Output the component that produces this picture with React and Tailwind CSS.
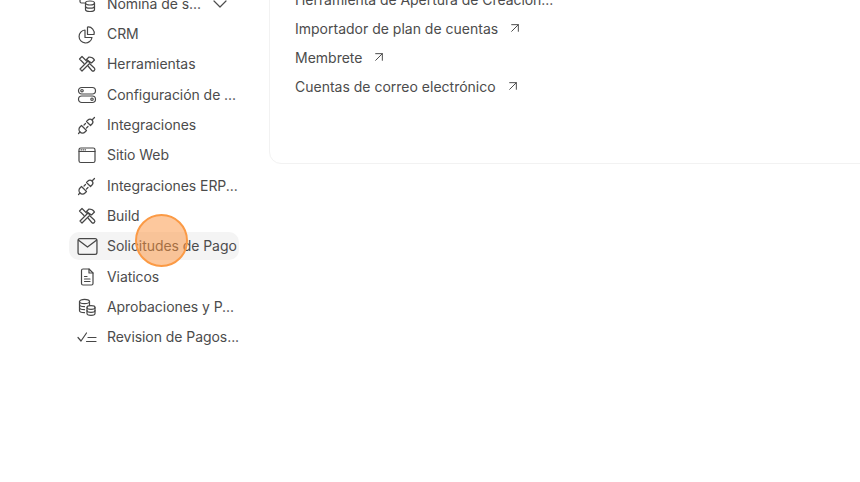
import React from 'react';
import { ChevronDown, ArrowUpRight } from 'lucide-react';

const stroke = {
  fill: 'none',
  stroke: '#474747',
  strokeWidth: 1.2,
  strokeLinecap: 'round',
  strokeLinejoin: 'round',
};

function Icon({ children, size = 20 }) {
  return (
    <svg width={size} height={size} viewBox="0 0 20 20" {...stroke}>
      {children}
    </svg>
  );
}

const PayrollIcon = () => (
  <Icon>
    <path d="M3 -2v9.500a1.500 1.500 0 0 0 1.500 1.500h3" />
    <path d="M3 4h4" />
    <ellipse cx="13" cy="9" rx="4.500" ry="2" />
    <path d="M8.500 9v6.500c0 1.100 2 2 4.500 2s4.500-.9 4.500-2V9" />
    <path d="M8.500 12.200c0 1.100 2 2 4.500 2s4.500-.9 4.500-2" />
  </Icon>
);

const PieIcon = () => (
  <Icon>
    <path d="M8 6a6.500 6.500 0 1 0 7 7.500H8z" />
    <path d="M10.500 3a6 6 0 0 1 6.500 7.500h-6.500z" />
  </Icon>
);

const ToolsIcon = () => (
  <Icon>
    <path d="M3 15 5 17 13 9 11 7z" />
    <path d="M9.500 5.500 12 3c2.500 0 4.500 1.200 5.500 3L14.500 9z" />
    <path d="M7 9.500 2.500 5 5 2.500 9.500 7" />
    <path d="M11 12l3.800 4.500a1.700 1.700 0 0 0 2.500-2.500L13 10" />
  </Icon>
);

const ServerIcon = () => (
  <Icon>
    <rect x="1.500" y="2.500" width="17" height="6.500" rx="3.200" />
    <rect x="1.500" y="11" width="17" height="6.500" rx="3.200" />
    <circle cx="5" cy="5.700" r="1.200" />
    <circle cx="15" cy="14.200" r="1.200" />
  </Icon>
);

const PlugIcon = () => (
  <Icon>
    <path d="M4.500 10.500 9.500 15.500 8 17a3.500 3.500 0 0 1-5-5z" />
    <path d="m3 17-1.500 1.500" />
    <path d="M9.500 6.500 13.500 10.500 15 9a2.800 2.800 0 0 0-4-4z" />
    <path d="M15.500 4.500 17.500 2.500" />
    <path d="M7 10 8.500 8.500M9.500 13 11 11.500" />
  </Icon>
);

const WindowIcon = () => (
  <Icon>
    <rect x="2" y="3" width="16" height="14.500" rx="1.800" />
    <path d="M2 6.500h16" />
    <path d="M4 4.800h.5M6 4.800h.5M8 4.800h.5" />
  </Icon>
);

const MailIcon = () => (
  <Icon size={21}>
    <rect x="1" y="2.500" width="18" height="15" rx="1.800" />
    <path d="m1.500 4 8.500 6.500L18.500 4" />
  </Icon>
);

const FileIcon = () => (
  <Icon>
    <path d="M4.500 3.500A1.500 1.500 0 0 1 6 2h6l4 4v10.500a1.500 1.500 0 0 1-1.500 1.500H6a1.500 1.500 0 0 1-1.500-1.500z" />
    <path d="M12 2v4h4" />
    <path d="M7.500 9.500H10M7.500 12h5.500M7.500 14.500h5.500" />
  </Icon>
);

const CoinsIcon = () => (
  <Icon>
    <ellipse cx="7.500" cy="4.500" rx="5" ry="2.200" />
    <path d="M2.500 4.500v9c0 1.200 2.200 2.200 5 2.200" />
    <path d="M2.500 7.500c0 1.200 2.200 2.200 5 2.200M2.500 10.500c0 1.200 2.200 2.200 5 2.200M12.500 4.500v4" />
    <ellipse cx="14" cy="10.500" rx="4" ry="1.800" />
    <path d="M10 10.500v6c0 1 1.800 1.800 4 1.800s4-.8 4-1.800v-6" />
    <path d="M10 13.500c0 1 1.800 1.800 4 1.800s4-.8 4-1.800" />
  </Icon>
);

const CheckListIcon = () => (
  <Icon>
    <path d="m1 10.500 3 3.500 5.500-8" />
    <path d="M11 10.500h8M9.500 14.500H19" />
  </Icon>
);

const navItems = [
  { label: 'Nómina de s...', icon: PayrollIcon, chevron: true },
  { label: 'CRM', icon: PieIcon },
  { label: 'Herramientas', icon: ToolsIcon },
  { label: 'Configuración de ...', icon: ServerIcon },
  { label: 'Integraciones', icon: PlugIcon },
  { label: 'Sitio Web', icon: WindowIcon },
  { label: 'Integraciones ERP...', icon: PlugIcon },
  { label: 'Build', icon: ToolsIcon },
  { label: 'Solicitudes de Pago', icon: MailIcon, active: true },
  { label: 'Viaticos', icon: FileIcon },
  { label: 'Aprobaciones y P...', icon: CoinsIcon },
  { label: 'Revision de Pagos...', icon: CheckListIcon },
];

const links = [
  { label: 'Importador de plan de cuentas' },
  { label: 'Membrete' },
  { label: 'Cuentas de correo electrónico' },
];

function NavItem({ item }) {
  const ItemIcon = item.icon;
  return (
    <div
      className={`flex items-center h-[28px] mb-[2.33px] rounded-[10px] ${item.active ? 'bg-[#f4f4f4]' : ''}`}
    >
      <div className="w-[38px] pl-[8px] shrink-0 flex items-center">
        <ItemIcon />
      </div>
      <span className="text-[14px] leading-none tracking-[-0.06px] text-[#4c4c4c] whitespace-nowrap">{item.label}</span>
      {item.chevron && <ChevronDown className="ml-[7px] w-6 h-6 text-[#4c4c4c]" strokeWidth={1.2} />}
    </div>
  );
}

export default function App() {
  return (
    <div className="relative w-[860px] h-[482px] overflow-hidden bg-white font-['Inter',sans-serif]">
      <div className="flex items-start pl-[69px] -mt-[10px]">
        <div className="w-[170px] -mt-[0.35px] shrink-0 flex flex-col">
          {navItems.map((item) => (
            <NavItem key={item.label} item={item} />
          ))}
        </div>

        <div className="ml-[30px] w-[620px] h-[174px] shrink-0 bg-white border border-[#f2f2f2] rounded-bl-xl pl-[25px] flex flex-col">
          <div className="text-[14px] leading-[20px] h-[20px] -mt-px mb-[8px] tracking-[-0.06px] text-[#4c4c4c] whitespace-nowrap">
            Herramienta de Apertura de Creación...
          </div>
          {links.map((link) => (
            <div key={link.label} className="flex items-center gap-[9px] h-[20px] mb-[9px] text-[14px] text-[#4c4c4c] whitespace-nowrap">
              <span>{link.label}</span>
              <ArrowUpRight className="w-4 h-4" strokeWidth={1.5} />
            </div>
          ))}
        </div>
      </div>

      {/* Click highlight from the recording */}
      <div className="absolute left-[135px] top-[213.5px] w-[53px] h-[53px] rounded-full bg-[#fb923c]/50 border-2 border-[#fb9a45]" />
    </div>
  );
}
